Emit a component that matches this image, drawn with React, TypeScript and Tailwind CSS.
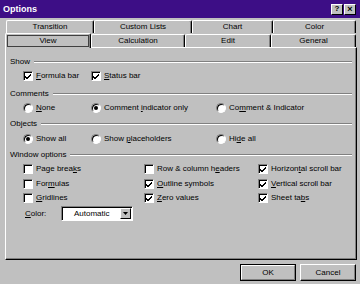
import React from 'react';

const Check: React.FC<{ on?: boolean }> = ({ on }) => (
  <span className="relative inline-block w-[10px] h-[10px] shrink-0 bg-white border-t border-l border-t-[#808080] border-l-[#808080] border-b border-r border-b-white border-r-white shadow-[inset_1px_1px_0_#000]">
    {on && (
      <svg className="absolute left-[1px] top-[1px]" width="7" height="7" viewBox="0 0 7 7">
        <path d="M0 3 L2 5 L6 1 M0 4 L2 6 L6 2" stroke="#000" strokeWidth="1" fill="none" />
      </svg>
    )}
  </span>
);

const Radio: React.FC<{ on?: boolean }> = ({ on }) => (
  <span className="relative inline-flex items-center justify-center w-[10px] h-[10px] shrink-0 rounded-full bg-white border border-t-[#808080] border-l-[#808080] border-b-white border-r-white shadow-[inset_1px_1px_0_#000]">
    {on && <span className="w-[4px] h-[4px] rounded-full bg-black" />}
  </span>
);

const Item: React.FC<{ kind: 'c' | 'r'; on?: boolean; w: string; children: React.ReactNode }> = ({ kind, on, w, children }) => (
  <div className={`flex items-center gap-[3px] ${w}`}>
    {kind === 'c' ? <Check on={on} /> : <Radio on={on} />}
    <span className="whitespace-nowrap">{children}</span>
  </div>
);

const Group: React.FC<{ label: string; mt: string }> = ({ label, mt }) => (
  <div className={`flex items-center h-[14px] pl-[3px] pr-[4px] ${mt}`}>
    <span className="whitespace-nowrap">{label}</span>
    <div className="flex-1 ml-[4px] border-t border-t-[#808080] border-b border-b-white" />
  </div>
);

const Tab: React.FC<{ w: string; label: string; h: string }> = ({ w, label, h }) => (
  <div className={`${w} ${h} flex items-center justify-center border-t border-l border-t-white border-l-white border-r border-r-black shadow-[inset_-1px_0_0_#808080] rounded-t-[2px]`}>
    {label}
  </div>
);

export default function App() {
  return (
    <div className="w-[360px] h-[284px] bg-[#c0c0c0] text-black text-[8px] leading-none overflow-hidden" style={{ fontFamily: '"Liberation Sans", Arial, sans-serif' }}>
      <div className="h-[18px] bg-[#3d0e86] flex items-center justify-between pl-[3px] pr-[4px]">
        <span className="text-white font-bold text-[9px]">Options</span>
        <div className="flex gap-[1px]">
          <div className="w-[12px] h-[11px] bg-[#c0c0c0] border-t border-l border-white border-r border-b border-r-black border-b-black flex items-center justify-center font-bold text-[8px]">?</div>
          <div className="w-[12px] h-[11px] bg-[#c0c0c0] border-t border-l border-white border-r border-b border-r-black border-b-black flex items-center justify-center font-bold text-[9px]">×</div>
        </div>
      </div>

      <div className="mt-[2px] ml-[6px] flex">
        <Tab w="w-[88px]" h="h-[13px]" label="Transition" />
        <Tab w="w-[98px]" h="h-[13px]" label="Custom Lists" />
        <Tab w="w-[81px]" h="h-[13px]" label="Chart" />
        <Tab w="w-[83px]" h="h-[13px]" label="Color" />
      </div>
      <div className="ml-[5px] flex">
        <div className="w-[86px] h-[15px] relative border-t border-l border-t-white border-l-white border-r border-r-black shadow-[inset_-1px_0_0_#808080] rounded-t-[2px] bg-[#c0c0c0] z-10 -mb-[1px]">
          <div className="absolute left-[1px] right-[1px] top-[1px] bottom-[1px] border border-[#404040] flex items-center justify-center">View</div>
        </div>
        <div className="flex mt-[1px]">
          <Tab w="w-[94px]" h="h-[13px]" label="Calculation" />
          <Tab w="w-[86px]" h="h-[13px]" label="Edit" />
          <Tab w="w-[85px]" h="h-[13px]" label="General" />
        </div>
      </div>

      <div className="ml-[5px] w-[352px] h-[213px] border-t border-l border-white border-r border-b border-r-black border-b-black shadow-[inset_-1px_-1px_0_#808080]">
        <div className="pt-[7px] pl-[1px]">
          <Group label="Show" mt="mt-0" />
          <div className="flex h-[14px] pl-[16px]">
            <Item kind="c" on w="w-[68px]"><u>F</u>ormula bar</Item>
            <Item kind="c" on w="w-[125px]"><u>S</u>tatus bar</Item>
          </div>

          <Group label="Comments" mt="mt-[4px]" />
          <div className="flex h-[14px] pl-[16px]">
            <Item kind="r" w="w-[68px]"><u>N</u>one</Item>
            <Item kind="r" on w="w-[125px]">Comment <u>i</u>ndicator only</Item>
            <Item kind="r" w="w-[120px]">Co<u>m</u>ment &amp; Indicator</Item>
          </div>

          <Group label="Objects" mt="mt-[2px]" />
          <div className="flex h-[14px] pl-[16px] mt-[1px]">
            <Item kind="r" on w="w-[68px]">Show all</Item>
            <Item kind="r" w="w-[125px]">Show <u>p</u>laceholders</Item>
            <Item kind="r" w="w-[120px]">Hi<u>d</u>e all</Item>
          </div>

          <Group label="Window options" mt="mt-[2px]" />
          <div className="flex h-[14px] pl-[16px]">
            <Item kind="c" w="w-[121px]">Page brea<u>k</u>s</Item>
            <Item kind="c" w="w-[114px]">Row &amp; column h<u>e</u>aders</Item>
            <Item kind="c" on w="w-[90px]">Horizon<u>t</u>al scroll bar</Item>
          </div>
          <div className="flex h-[14px] pl-[16px] mt-[1px]">
            <Item kind="c" w="w-[121px]">For<u>m</u>ulas</Item>
            <Item kind="c" on w="w-[114px]"><u>O</u>utline symbols</Item>
            <Item kind="c" on w="w-[90px]"><u>V</u>ertical scroll bar</Item>
          </div>
          <div className="flex h-[14px] pl-[16px]">
            <Item kind="c" w="w-[121px]"><u>G</u>ridlines</Item>
            <Item kind="c" on w="w-[114px]"><u>Z</u>ero values</Item>
            <Item kind="c" on w="w-[90px]">Sheet ta<u>b</u>s</Item>
          </div>
          <div className="flex items-center h-[15px] pl-[18px] mt-[1px]">
            <span className="w-[36px]"><u>C</u>olor:</span>
            <div className="w-[72px] h-[15px] bg-white border-t border-l border-t-[#808080] border-l-[#808080] border-b border-r border-b-white border-r-white shadow-[inset_1px_1px_0_#000] flex items-center">
              <span className="flex-1 pl-[12px]">Automatic</span>
              <div className="w-[11px] h-[11px] mr-[1px] bg-[#c0c0c0] border-t border-l border-white border-r border-b border-r-black border-b-black flex items-center justify-center">
                <svg width="5" height="3" viewBox="0 0 5 3"><path d="M0 0 H5 L2.5 3 Z" fill="#000" /></svg>
              </div>
            </div>
          </div>
        </div>
      </div>

      <div className="flex justify-end gap-[4px] mt-[4px] pr-[4px]">
        <div className="w-[56px] h-[17px] border border-black">
          <div className="w-full h-full border-t border-l border-white border-r border-b border-r-[#808080] border-b-[#808080] flex items-center justify-center">OK</div>
        </div>
        <div className="w-[56px] h-[17px] border-t border-l border-white border-r border-b border-r-black border-b-black shadow-[inset_-1px_-1px_0_#808080] flex items-center justify-center">Cancel</div>
      </div>
    </div>
  );
}
